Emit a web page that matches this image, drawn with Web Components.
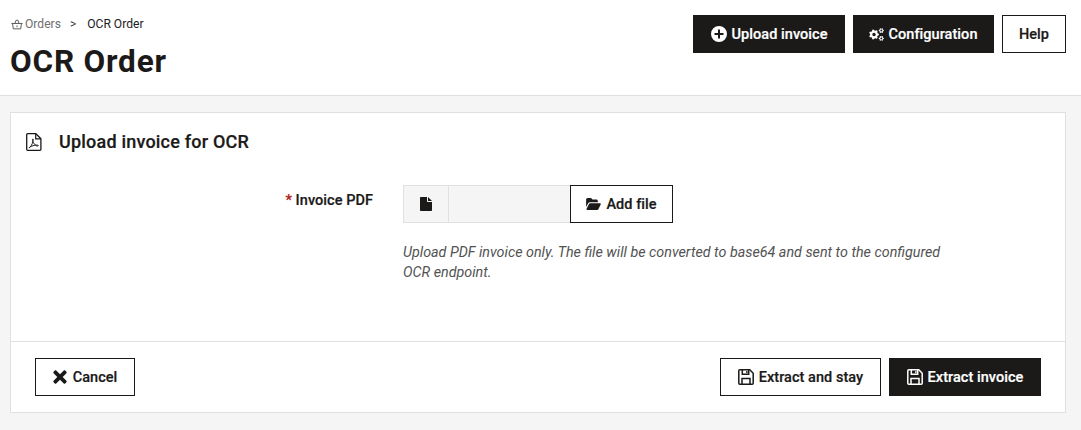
<!DOCTYPE html>
<html lang="en"><head><meta charset="utf-8"><title>OCR Order</title>
<style>
html,body{margin:0;padding:0}
body{width:1081px;height:430px;overflow:hidden;background:#f5f5f5;font-family:Roboto,"Noto Sans",sans-serif;color:#1b1a18;font-size:14px}
</style></head><body>
<ocr-page></ocr-page>
<script>
const gear=(cx,cy,ro,ri,h,t)=>{let d='';const n=t*4;for(let i=0;i<n;i++){const a=(i-.5)/n*2*Math.PI,r=(i%4<2)?ro:ri;d+=(i?'L':'M')+(cx+r*Math.cos(a)).toFixed(2)+' '+(cy+r*Math.sin(a)).toFixed(2);}
 d+=`Z M${cx-h} ${cy}a${h} ${h} 0 1 0 ${2*h} 0a${h} ${h} 0 1 0 ${-2*h} 0Z`;return `<path fill="currentColor" fill-rule="evenodd" d="${d}"/>`};
const ICONS={
 plus:'<svg viewBox="0 0 16 16" width="16" height="16"><path fill="currentColor" fill-rule="evenodd" d="M8 0a8 8 0 1 1 0 16A8 8 0 0 1 8 0zM7 3.500v3.500H3.500v2H7v3.500h2V9h3.500V7H9V3.500z"/></svg>',
 cogs:'<svg viewBox="0 0 15 13" width="15" height="13">'+gear(5,6.5,5,3.900,1.700,7)+gear(12.300,2.600,2.600,1.900,1,6)+gear(12.300,10.400,2.600,1.900,1,6)+'</svg>',
 file:'<svg viewBox="0 0 12 14" width="12" height="14"><path fill="currentColor" d="M0 .8C0 .3.300 0 .8 0H7v4.200c0 .5.300.8.800.8H12v8.200c0 .5-.3.800-.8.800H.8c-.5 0-.8-.3-.8-.8zM8 0l4 4H8z"/></svg>',
 folder:'<svg viewBox="0 0 16 13" width="15" height="12"><path fill="currentColor" d="M0 2C0 .8.700 0 1.800 0h2.900c.8 0 1.300.4 1.700 1l.4.600h4.200c1 0 1.700.7 1.700 1.700V4.500H4.400c-1 0-1.800.5-2.300 1.400L0 9.800zM4.500 5.600H15c.8 0 1.200.7.800 1.400l-2.400 4.800c-.3.700-.9 1.200-1.700 1.200H1.300c-.8 0-1.200-.7-.8-1.400L3 6.800c.3-.7.800-1.200 1.500-1.200z"/></svg>',
 times:'<svg viewBox="0 0 14 14" width="14" height="14"><path fill="currentColor" d="M3.200.6 7 4.300 10.800.6c.4-.4 1-.4 1.400 0l1.200 1.200c.4.4.4 1 0 1.400L9.700 7l3.700 3.800c.4.400.4 1 0 1.400l-1.200 1.200c-.4.4-1 .4-1.400 0L7 9.700l-3.800 3.700c-.4.4-1 .4-1.400 0L.6 12.200c-.4-.4-.4-1 0-1.400L4.300 7 .6 3.200c-.4-.4-.4-1 0-1.400L1.800.6c.4-.4 1-.4 1.400 0z"/></svg>',
 save:'<svg viewBox="0 0 16 16" width="16" height="16"><path fill="none" stroke="currentColor" stroke-width="1.500" stroke-linejoin="round" d="M1.800.8h10l3.400 3.400v10c0 .6-.4 1-1 1H1.800c-.6 0-1-.4-1-1V1.800c0-.6.4-1 1-1z"/><path fill="none" stroke="currentColor" stroke-width="1.500" d="M4 15V9.500h8V15"/><path fill="none" stroke="currentColor" stroke-width="1.500" d="M4.300 1v4.200h6.400V1"/><rect x="8.200" y="2" width="1.300" height="2.200" fill="currentColor"/></svg>',
 pdf:'<svg viewBox="0 0 16 18" width="16" height="18"><path fill="none" stroke="currentColor" stroke-width="1.300" stroke-linejoin="round" d="M1.700.7h8.200l5 5v10.600c0 .6-.4 1-1 1H1.700c-.6 0-1-.4-1-1V1.700c0-.6.400-1 1-1z"/><path fill="none" stroke="currentColor" stroke-width="1.200" d="M9.700.8v5h5"/><path fill="none" stroke="currentColor" stroke-width="1" d="M3.200 14.800c1.500-.8 3-3.500 3.700-6.200-.6-1.600-.5-2.600 0-2.600s.6 1.300 0 2.600c.6 1.700 1.700 3 3 3.500 1.400-.1 2.500.1 2.500.6s-1.500.6-2.900-.5c-1.800.3-3.700.8-4.700 1.300-.5.800-1.300 1.300-1.600.8z"/></svg>',
 basket:'<svg viewBox="0 0 14 12" width="12" height="11"><g fill="none" stroke="currentColor" stroke-width="1.100" stroke-linejoin="round"><path d="M.5 4.800h13M1.800 4.800l.9 6.300h8.600l.9-6.300"/><path d="M4.500 4.800 6 1h2l1.500 3.800"/><path d="M7 7.200v2"/></g></svg>'
};
class Base extends HTMLElement{
  constructor(html){super();this.attachShadow({mode:'open'}).innerHTML=html;}
}
customElements.define('ui-icon',class extends HTMLElement{
  connectedCallback(){
    if(!this.shadowRoot){
      this.attachShadow({mode:'open'}).innerHTML='<style>:host{display:inline-flex;align-items:center;justify-content:center;line-height:0}</style>'+ICONS[this.getAttribute('name')];
    }
  }
});
customElements.define('ui-button',class extends HTMLElement{
  constructor(){super();this.attachShadow({mode:'open'}).innerHTML=`<style>
  :host{display:inline-flex;box-sizing:border-box;height:38px;align-items:center;justify-content:center;gap:var(--g,5px);border:1px solid #1b1a18;background:#fff;color:#1b1a18;font-size:14.5px;font-weight:500;white-space:nowrap;letter-spacing:.05px;-webkit-text-stroke:.2px currentColor}
  :host([dark]){background:#1b1a18;color:#fff}
  </style><slot name="icon"></slot><slot></slot>`;}
});
customElements.define('page-header',class extends Base{
  constructor(){super(`<style>
  :host{display:flex;box-sizing:border-box;height:96px;background:#fff;border-bottom:1px solid #e0e0e0;padding:15px 15px 0 11px;justify-content:space-between;align-items:flex-start}
  nav{display:flex;align-items:center;font-size:12.100px;line-height:18px;height:18px;color:#6f6f6f}
  nav ui-icon{margin-right:2px;color:#555}
  nav i{font-style:normal;margin:0 11px 0 9px;color:#444}
  nav b{font-weight:400;color:#222}
  h1{margin:10px 0 0 -1px;font-size:31.500px;line-height:38px;font-weight:700;letter-spacing:.8px;color:#1b1a18}
  .acts{display:flex;gap:8px}
  </style><div><nav><ui-icon name="basket"></ui-icon>Orders<i>&gt;</i><b>OCR Order</b></nav><h1>OCR Order</h1></div><div class="acts"><slot></slot></div>`);}
});
customElements.define('ui-card',class extends Base{
  constructor(){super(`<style>
  :host{display:flex;flex-direction:column;box-sizing:border-box;height:301px;background:#fff;border:1px solid #e0e0e0}
  header{display:flex;align-items:center;height:57px;padding:0 0 0 15px;font-size:18px;font-weight:500;gap:17px;color:#1b1a18;letter-spacing:.2px;-webkit-text-stroke:.2px currentColor}
  .body{flex:1}
  footer{height:71px;border-top:1px solid #e0e0e0;box-sizing:border-box;padding:16px 24px;display:flex;justify-content:space-between}
  .r{display:flex;gap:8px}
  </style><header><ui-icon name="pdf"></ui-icon><slot name="title"></slot></header><div class="body"><slot></slot></div><footer><slot name="left"></slot><div class="r"><slot name="right"></slot></div></footer>`);}
});
customElements.define('file-field',class extends Base{
  constructor(){super(`<style>
  :host{display:grid;grid-template-columns:362px 1fr;column-gap:30px;padding-top:15px}
  label{justify-self:end;font-size:14.500px;font-weight:500;line-height:20px;padding-top:6px;color:#1b1a18;letter-spacing:.05px;-webkit-text-stroke:.2px currentColor}
  label span{color:#b11a1a}
  .group{display:flex;height:38px}
  .ic{box-sizing:border-box;width:46px;background:#f5f5f5;border:1px solid #e0e0e0;display:flex;align-items:center;justify-content:center}
  .in{box-sizing:border-box;width:121px;background:#f5f5f5;border:1px solid #e0e0e0;border-left:0;border-right:0}
  p{margin:19px 0 0;width:545px;font-size:14.300px;line-height:20px;font-style:italic;color:#525252}
  </style><label><span>*</span> Invoice PDF</label><div><div class="group"><div class="ic"><ui-icon name="file"></ui-icon></div><div class="in"></div><slot></slot></div><p>Upload PDF invoice only. The file will be converted to base64 and sent to the configured OCR endpoint.</p></div>`);}
});
customElements.define('ocr-page',class extends Base{
  constructor(){super(`<style>
  :host{display:block}
  main{padding:16px 15px 0 10px}
  .w1{width:152px}.w2{width:141px}.w3{width:64px}.w4{width:103px}.w5{width:100px}.w6{width:161px}.w7{width:152px}
  </style>
  <page-header>
    <ui-button dark class="w1"><ui-icon slot="icon" name="plus"></ui-icon>Upload invoice</ui-button>
    <ui-button dark class="w2" style="--g:4px"><ui-icon slot="icon" name="cogs"></ui-icon>Configuration</ui-button>
    <ui-button class="w3">Help</ui-button>
  </page-header>
  <main><ui-card>
    <span slot="title">Upload invoice for OCR</span>
    <file-field><ui-button class="w4"><ui-icon slot="icon" name="folder"></ui-icon>Add file</ui-button></file-field>
    <ui-button slot="left" class="w5" style="--g:6px"><ui-icon slot="icon" name="times"></ui-icon>Cancel</ui-button>
    <ui-button slot="right" class="w6"><ui-icon slot="icon" name="save"></ui-icon>Extract and stay</ui-button>
    <ui-button slot="right" dark class="w7"><ui-icon slot="icon" name="save"></ui-icon>Extract invoice</ui-button>
  </ui-card></main>`);}
});
</script>
</body></html>
